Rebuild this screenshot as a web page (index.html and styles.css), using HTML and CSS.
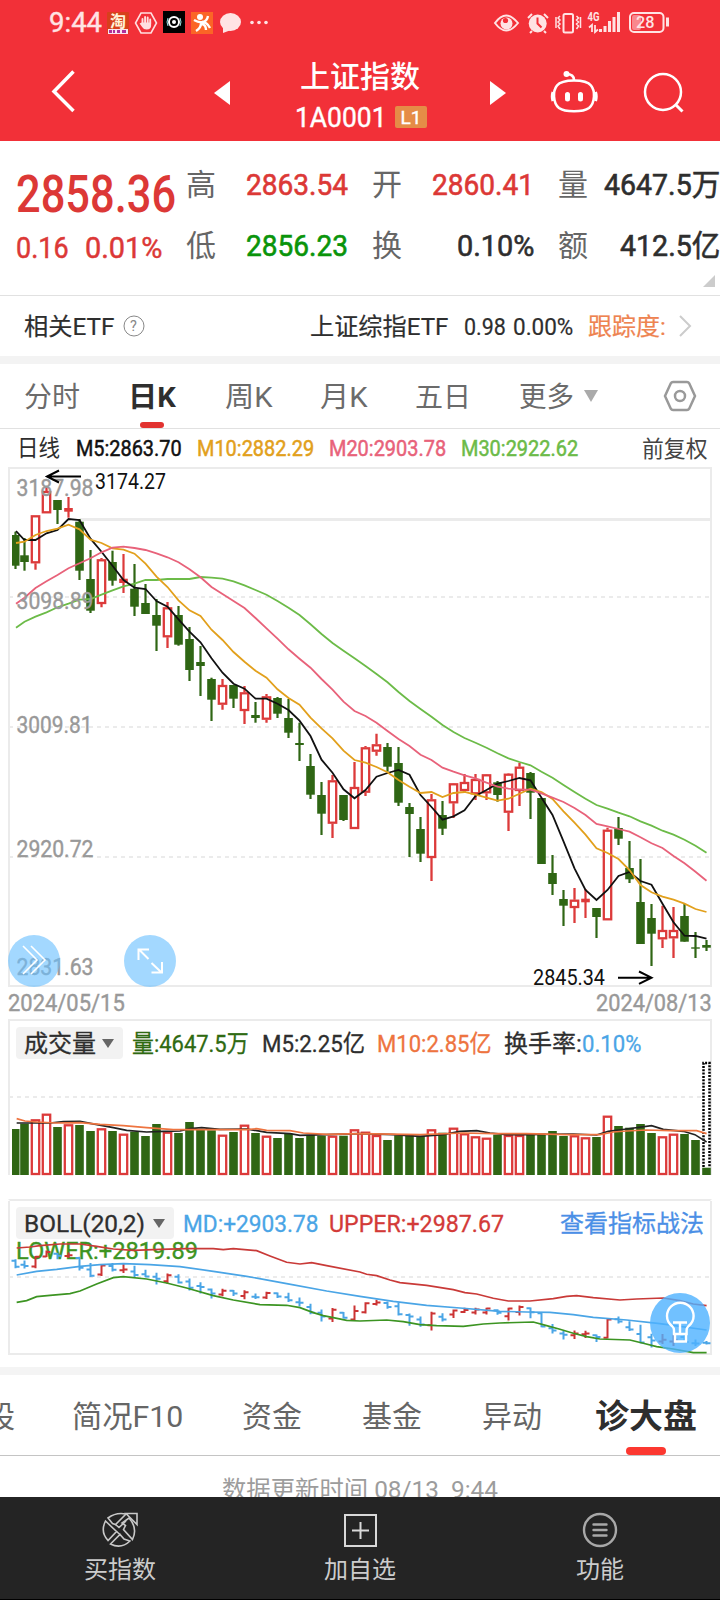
FILE: index.html
```html
<!DOCTYPE html>
<html lang="zh-CN">
<head>
    <meta charset="UTF-8">
    <meta name="viewport" content="width=device-width, initial-scale=1.0">
    <title>上证指数</title>
    <link rel="stylesheet" href="styles.css">
</head>

<body>
    <header class="header">
        <div class="status">
            <span class="time" data-w="53">9:44</span>
            <svg class="apps" width="164" height="26" viewBox="105 10 164 26">
                <rect x="107" y="12" width="22" height="22" rx="1" fill="#d8401c"/>
                <rect x="108" y="29" width="20" height="5" fill="#fbe3ee"/>
                <path d="M109 31.500h3m1 0h2m2 0h3m2 0h4" stroke="#b0309a" stroke-width="3"/>
                <text x="110" y="27" font-size="16" font-weight="700" fill="#fff3d8">淘</text>
                <path d="M141 13h10l5.500 10-5.500 10h-10l-5.500-10z" fill="none" stroke="#ffdfe0" stroke-width="1.600"/>
                <path d="M142.500 24v-5m2.600 4v-6m2.600 6v-5.500m2.500 6v-4" stroke="#ffdfe0" stroke-width="1.900" stroke-linecap="round"/>
                <path d="M141.600 22.500h9.500v3q0 4-4.500 4-3 0-4.500-2.500l-2.500-3.500 1-.6z" fill="#ffdfe0"/>
                <rect x="163" y="11" width="22" height="22"/>
                <circle cx="174" cy="22" r="5" fill="none" stroke="#fff" stroke-width="2"/>
                <circle cx="174" cy="22" r="2" fill="#fff"/>
                <path d="M168 18q-2 4 0 8m12-8q2 4 0 8" fill="none" stroke="#9fe6ea"/>
                <rect x="191" y="12" width="22" height="22" fill="#fb6526"/>
                <circle cx="200" cy="17" r="3" fill="#fff"/>
                <path d="M194 20q5 3 9 2 4-1 5-6M202 22q5 0 8 6M201 23q0 5-5 8M202 24q4 1 4 6" fill="none" stroke="#fff" stroke-width="2.400"/>
                <ellipse cx="230.500" cy="22" rx="10.500" ry="9" fill="#ffe3e4"/>
                <path d="M223 27v6l8-3z" fill="#ffe3e4"/>
                <circle cx="252" cy="22.500" r="1.800" fill="#ffe3e4"/>
                <circle cx="259" cy="22.500" r="1.800" fill="#ffe3e4"/>
                <circle cx="266" cy="22.500" r="1.800" fill="#ffe3e4"/>
            </svg>
            <svg class="sys" width="180" height="26" viewBox="492 10 180 26">
                <g fill="none" stroke="#ffe3e4" stroke-width="2">
                    <path d="M495 23q11-15 23 0-12 15-23 0z"/>
                    <path d="M528 18l4-4m12 0l4 4M532 31l-2 2m14-2l2 2"/>
                    <rect x="563.500" y="14" width="9.500" height="18.500" rx="1.500"/>
                    <path d="M560 16l-2 2 2 2-2 2 2 2-2 2 2 3M556 17v11M576.500 16l2 2-2 2 2 2-2 2 2 2-2 3M580.500 17v11" stroke-width="1.500"/>
                    <path d="M592 32v-7l-3 2.500M595 25v7l3-2.500" stroke-width="1.800"/>
                    <path d="M600.500 32v-3m4.500 3v-6m4.500 6v-11m4.500 11v-15m4.500 15v-20" stroke-width="3"/>
                    <rect x="630" y="13" width="33.500" height="19" rx="4"/>
                    <path d="M667.500 17.500v9" stroke-width="3"/>
                </g>
                <circle cx="506.500" cy="23.500" r="6" fill="#ffe3e4"/>
                <circle cx="505.500" cy="20.500" r="2.600" fill="#f23038"/>
                <circle cx="537.700" cy="23.500" r="9" fill="#ffe3e4"/>
                <path d="M537.500 17.500v6l4 4" fill="none" stroke="#f23038" stroke-width="2"/>
                <rect x="632" y="15" width="9" height="15" rx="2" fill="#f9888d"/>
                <text x="587.500" y="21" font-size="12.500" font-weight="700" fill="#ffe3e4" textLength="12" lengthAdjust="spacingAndGlyphs">4G</text>
                <text x="636" y="28" font-size="17" font-weight="500" fill="#ffe3e4" textLength="18.500" lengthAdjust="spacingAndGlyphs">28</text>
            </svg>
        </div>
        <div class="nav">
            <svg class="back" width="30" height="48" viewBox="48 67 30 48"><path d="M73.500 71.500L54 91.500l19.500 19.500" fill="none" stroke="#fff" stroke-width="3.500"/></svg>
            <svg class="prev" width="16" height="24" viewBox="0 0 16 24"><path d="M16 0v24L0 12z" fill="#fff"/></svg>
            <div class="title">
                <h1 data-w="120">上证指数</h1>
                <div class="code"><span data-w="92">1A0001</span><b>L1</b></div>
            </div>
            <svg class="next" width="16" height="24" viewBox="0 0 16 24"><path d="M0 0v24L16 12z" fill="#fff"/></svg>
            <svg class="robot" width="48" height="46" viewBox="550 69 48 46">
                <path d="M574 80.500q13 0 17 5 3.500 4.500 3 11-.5 8-5 11.500-4.500 3.300-15 3.300t-15-3.300q-4.500-3.500-5-11.500-.5-6.500 3-11 4-5 17-5z" fill="none" stroke="#fff" stroke-width="2.600"/>
                <path d="M553 92q-1.500 4.500 0 9M595.500 92q1.500 4.500 0 9" fill="none" stroke="#fff" stroke-width="3"/>
                <path d="M574 80q0-6-8-6" fill="none" stroke="#fff" stroke-width="2.600"/>
                <circle cx="566.500" cy="74" r="3" fill="#fff"/>
                <path d="M567.500 94.500v4.500m13-4.500v4.500" stroke="#fff" stroke-width="5" stroke-linecap="round"/>
            </svg>
            <svg class="search" width="42" height="42" viewBox="643 71 42 42"><circle cx="663" cy="92" r="18" fill="none" stroke="#fff" stroke-width="2.500"/><path d="M675.500 104.500l7 7" stroke="#fff" stroke-width="3"/></svg>
        </div>
    </header>

    <section class="quote">
        <div class="main">
            <div class="price up"><span data-w="160">2858.36</span></div>
            <div class="change up"><span data-w="53">0.16</span><span data-w="77">0.01%</span></div>
        </div>
        <div class="cols">
            <div class="item"><label>高</label><span class="up" data-w="102">2863.54</span></div>
            <div class="item"><label>开</label><span class="up" data-w="102">2860.41</span></div>
            <div class="item"><label>量</label><span data-w="116">4647.5万</span></div>
            <div class="item"><label>低</label><span class="down" data-w="102">2856.23</span></div>
            <div class="item"><label>换</label><span data-w="77">0.10%</span></div>
            <div class="item"><label>额</label><span data-w="100">412.5亿</span></div>
        </div>
        <i class="corner"></i>
    </section>

    <section class="etf">
        <span data-w="90">相关ETF</span>
        <svg class="help" width="22" height="22" viewBox="0 0 22 22"><circle cx="11" cy="11" r="10" fill="none" stroke="#888"/><text x="7" y="16" font-size="14.500" fill="#888">?</text></svg>
        <span class="name" data-w="138">上证综指ETF</span>
        <span class="v1" data-w="42">0.98</span>
        <span class="v2" data-w="60">0.00%</span>
        <span class="track" data-w="78">跟踪度:</span>
        <svg class="arrow" width="14" height="24" viewBox="0 0 14 24"><path d="M2 2l10 10L2 22" fill="none" stroke="#ccc" stroke-width="2"/></svg>
    </section>

    <nav class="period">
        <span class="t1" data-w="56">分时</span>
        <span class="t2 on" data-w="48">日K</span>
        <span class="t3" data-w="48">周K</span>
        <span class="t4" data-w="48">月K</span>
        <span class="t5" data-w="56">五日</span>
        <span class="t6" data-w="55">更多</span>
        <i class="tri"></i>
        <svg class="setting" width="34" height="32" viewBox="0 0 34 32"><path d="M10 2h14q1.500 0 2.200 1.300L32 16l-5.800 12.700Q25.500 30 24 30H10q-1.500 0-2.200-1.300L2 16 7.800 3.300Q8.500 2 10 2z" fill="none" stroke="#999" stroke-width="2.500"/><circle cx="17" cy="16" r="5" fill="none" stroke="#999" stroke-width="2.500"/></svg>
    </nav>

    <div class="ma">
        <span class="c-text" data-w="43">日线</span>
        <span class="c-m5" data-w="106">M5:2863.70</span>
        <span class="c-m10" data-w="117">M10:2882.29</span>
        <span class="c-m20" data-w="117">M20:2903.78</span>
        <span class="c-m30" data-w="117">M30:2922.62</span>
        <span class="fq" data-w="66">前复权</span>
    </div>

    <div class="panel">
        <svg class="chart" width="720" height="520" viewBox="0 467 720 520">
            <path d="M9 468h702M9 986h702" class="frame"/>
            <path d="M9 467v520M711 467v520" class="frame"/>
            <path d="M9 597h700M9 727h700M9 857h700" class="dash"/>
            <path d="M80 519.500h631" stroke="#ebebeb" stroke-width="3"/>
            <g id="kline"></g>
            <g class="axis">
                <text x="16.500" y="496" textLength="77" lengthAdjust="spacingAndGlyphs">3187.98</text>
                <text x="16.500" y="609" textLength="77" lengthAdjust="spacingAndGlyphs">3098.89</text>
                <text x="16.500" y="733" textLength="76" lengthAdjust="spacingAndGlyphs">3009.81</text>
                <text x="16.500" y="857" textLength="77" lengthAdjust="spacingAndGlyphs">2920.72</text>
                <text x="16.500" y="975" textLength="77" lengthAdjust="spacingAndGlyphs">2831.63</text>
            </g>
            <g class="mark">
                <text x="95" y="489" textLength="71" lengthAdjust="spacingAndGlyphs">3174.27</text>
                <text x="533" y="984.500" textLength="72" lengthAdjust="spacingAndGlyphs">2845.34</text>
                <path d="M81 476.500H47M59 470.500l-12 6 12 6M618 977.700h33M639 971.500l12.500 6.200-12.500 6.200"/>
            </g>
            <circle cx="34" cy="961" r="26" class="bubble"/>
            <path d="M23 946l14 14-14 14M31 946l14 14-14 14" fill="none" stroke="#fff" stroke-width="1.600"/>
            <circle cx="150" cy="961" r="26" class="bubble"/>
            <path d="M148.500 959l-9.500-9.500M138.500 960v-10.500h10.500M151.500 963l9.500 9M162 962v10.500h-10.500" fill="none" stroke="#fff" stroke-width="2"/>
        </svg>
        <div class="dates">
            <span data-w="117">2024/05/15</span>
            <span data-w="116">2024/08/13</span>
        </div>
    </div>

    <div class="panel vol">
        <div class="legend">
            <span class="pick"><span data-w="72">成交量</span><i></i></span>
            <span class="c-green" data-w="117">量:4647.5万</span>
            <span class="c-text" data-w="103">M5:2.25亿</span>
            <span class="c-orange" data-w="115">M10:2.85亿</span>
            <span class="c-text hs" data-w="78">换手率:</span><span class="c-blue rate" data-w="59">0.10%</span>
        </div>
        <svg class="chart" width="720" height="115" viewBox="0 1061 720 115">
            <path d="M9 1097h700" class="dash"/>
            <g id="volume"></g>
            <g transform="translate(0 1010) scale(.3333)" fill="none" stroke-width="5">
                <path stroke="#222" d="M50 339L150 339 190 335 240 334 275 341 340 353 380 361 440 366 490 364 540 363 570 356 605 353 660 358 740 357 800 367 870 371 900 376 1080 371 1180 374 1260 379 1330 374 1380 364 1430 362 1470 369 1520 374 1580 374 1720 372 1790 375 1825 364 1880 357 1955 347 1990 358 2050 364 2085 374 2120 396"/>
                <path stroke="#ee7440" d="M50 326L75 333 110 336 170 339 240 338 300 343 370 347 440 353 520 359 740 359 770 356 800 361 870 362 910 369 980 373 1080 371 1260 374 1390 369 1480 371 1580 371 1700 374 1800 374 1840 366 1880 363 1940 360 2010 362 2090 362 2120 371"/>
            </g>
        </svg>
    </div>

    <div class="panel boll">
        <div class="legend">
            <span class="pick"><span data-w="121">BOLL(20,2)</span><i></i></span>
            <span class="c-blue md" data-w="135">MD:+2903.78</span>
            <span class="c-red" data-w="175">UPPER:+2987.67</span>
            <span class="link" data-w="144">查看指标战法</span>
        </div>
        <svg class="chart" width="720" height="115" viewBox="0 1241 720 115">
            <path d="M9 1277h700" class="dash"/>
            <path d="M8 1354h704" class="frame"/>
            <text x="16" y="1259" class="lower" textLength="182" lengthAdjust="spacingAndGlyphs">LOWER:+2819.89</text>
            <g id="ohlc"></g>
            <g transform="translate(0 1010) scale(.3333)" fill="none" stroke-width="5">
                <path stroke="#c93a38" d="M50 714L90 711 120 707 180 702 240 702 290 709 340 717 400 721 480 718 560 716 640 716 670 719 700 716 770 722 810 738 860 757 900 762 935 758 980 767 1080 786 1100 793 1130 797 1170 810 1200 818 1280 826 1360 839 1395 848 1430 852 1480 865 1525 873 1590 873 1660 866 1700 859 1730 857 1780 863 1860 870 1910 867 1990 864 2040 872 2080 882 2120 887"/>
                <path stroke="#4aa5e6" d="M50 795L110 784 170 778 240 769 300 764 370 761 450 764 540 770 640 784 740 799 860 821 980 843 1080 859 1180 874 1280 886 1380 894 1500 904 1580 906 1650 907 1720 914 1780 922 1880 930 1980 941 2120 960"/>
                <path stroke="#3c9422" d="M50 877L80 872 110 860 150 856 210 851 240 843 290 822 340 803 370 800 440 807 500 819 560 834 640 857 700 870 780 884 860 886 900 893 940 908 970 917 1000 923 1040 931 1080 933 1160 930 1210 935 1260 944 1310 947 1390 949 1450 942 1500 939 1600 936 1640 947 1680 958 1720 970 1760 980 1800 987 1890 990 1930 1000 1970 1010 2020 1017 2080 1028 2120 1028"/>
            </g>
            <circle cx="680" cy="1323" r="30" fill="#4db2ff" fill-opacity=".8"/>
            <g fill="none" stroke="#fff" stroke-width="2.400">
                <path d="M674 1334v-4q0-2-2-4-5-4-5-10a13.300 13.300 0 0 1 26.600 0q0 6-5 10-2 2-2 4v4zM675 1334v7.500h11v-7.500"/>
                <path d="M673 1322.500h14M680 1322.500v11"/>
            </g>
        </svg>
    </div>

    <nav class="tabs">
        <span class="b0">成分股</span>
        <span class="b1" data-w="111">简况F10</span>
        <span class="b2" data-w="60">资金</span>
        <span class="b3" data-w="60">基金</span>
        <span class="b4" data-w="60">异动</span>
        <span class="b5 on" data-w="102">诊大盘</span>
    </nav>

    <p class="update"><span data-w="276">数据更新时间 08/13&nbsp; 9:44</span></p>

    <footer class="bar">
        <div class="btn">
            <svg width="38" height="38" viewBox="101 1511 38 38" fill="none" stroke="#c8c8c8" stroke-width="1.600">
                <path d="M108 1518q8-6 18-4l-10.500 10.500 -3-1zM129 1518q9 10 3.500 21.500l-9-10 2-4-3.500-2.500zM105.500 1521l11 10.500-8.500 9q-8-8.500-2.500-19.500zM110.500 1544l9.500-9.500 4 4.500 6 2q-9 8.500-19.500 3z"/>
                <path d="M126 1513.500h11v11zM115.500 1524.500l3.500 3 7-6.500M116.500 1531.500l3.500 3"/>
            </svg>
            <span data-w="72">买指数</span>
        </div>
        <div class="btn">
            <svg width="38" height="38" viewBox="0 0 38 38" fill="none" stroke="#d8d8d8" stroke-width="2"><rect x="4" y="4" width="31" height="31"/><path d="M11 19.500h17M19.500 11v17"/></svg>
            <span data-w="72">加自选</span>
        </div>
        <div class="btn">
            <svg width="38" height="38" viewBox="0 0 38 38" fill="none" stroke="#a8a8a8" stroke-width="2.400"><circle cx="19" cy="19" r="16"/><path d="M12.500 13.500h13M12.500 19h13M12.500 24.500h13" stroke-linecap="round"/></svg>
            <span data-w="48">功能</span>
        </div>
    </footer>

    <script src="main.js"></script>
</body>
</html>
```
FILE: styles.css
```css
* {
    box-sizing: border-box;
}
body, h1, p {
    margin: 0;
    padding: 0;
}
body {
    display: flex;
    flex-direction: column;
    width: 720px;
    height: 1600px;
    overflow: hidden;
    background: #fff;
    color: #2e2e2e;
    font-family: Roboto, "Noto Sans CJK SC", sans-serif;
}
svg {
    display: block;
    flex: none;
}
[data-w] {
    display: inline-block;
    flex: none;
    white-space: nowrap;
}
.fit {
    display: inline-block;
    transform-origin: 0 50%;
}
.up { color: #dc3836; }
.down { color: #0a940a; }

/* 顶部 */
.header {
    flex: none;
    height: 141px;
    background: #f23038;
    color: #fff;
}
.status {
    display: flex;
    align-items: center;
    height: 45px;
    padding-left: 49px;
}
.time {
    padding-top: 2px;
    color: #ffe3e4;
    font-size: 27px;
    line-height: 45px;
    -webkit-text-stroke: .4px;
}
.apps { margin-left: 3px; }
.sys { margin-left: 223px; }
.nav {
    display: flex;
    height: 96px;
    padding-left: 48px;
}
.back { margin-top: 22px; }
.prev { margin: 36px 0 0 136px; }
.title {
    width: 228px;
    margin-left: 16px;
    text-align: center;
}
.title h1 {
    margin-top: 11px;
    font-size: 30px;
    font-weight: 500;
    line-height: 42px;
}
.code {
    display: flex;
    align-items: center;
    padding-left: 49px;
    font-size: 27px;
    line-height: 40px;
    font-weight: 400;
    -webkit-text-stroke: .4px;
}
.code b {
    width: 32px;
    height: 22px;
    margin: -2px 0 0 8px;
    border-radius: 2px;
    background: #e58c47;
    font-size: 19px;
    font-weight: 400;
    line-height: 23px;
}
.next { margin: 36px 0 0 16px; }
.robot { margin: 24px 0 0 44px; }
.search { margin: 26px 0 0 45px; }

/* 行情 */
.quote {
    position: relative;
    display: flex;
    flex: none;
    height: 155px;
    border-bottom: 1px solid #e1e1e1;
}
.main {
    width: 187px;
    padding-left: 16px;
}
.price {
    height: 60px;
    margin-top: 24px;
    font-size: 51px;
    font-weight: 500;
    line-height: 60px;
}
.change {
    display: flex;
    gap: 16px;
    font-size: 30px;
    line-height: 45px;
    -webkit-text-stroke: .5px;
}
.cols {
    display: grid;
    grid-template-columns: 161px 161px 161px;
    grid-auto-rows: 61px;
    column-gap: 25px;
    margin-top: 13px;
}
.item {
    display: flex;
    justify-content: space-between;
    font-size: 30px;
    line-height: 61px;
    -webkit-text-stroke: .6px;
}
.item label {
    margin-left: -1px;
    color: #666;
    -webkit-text-stroke: 0;
}
.corner {
    position: absolute;
    right: 5px;
    bottom: 8px;
    border-bottom: 12px solid #ccc;
    border-left: 12px solid transparent;
}

/* ETF */
.etf {
    display: flex;
    align-items: center;
    flex: none;
    height: 68px;
    padding-left: 24px;
    border-bottom: 8px solid #f3f3f3;
    font-size: 24px;
    line-height: 58px;
    -webkit-text-stroke: .2px;
}
.etf > span { padding-top: 2px; }
.help {
    margin-left: 9px;
    -webkit-text-stroke: 0;
}
.name { margin-left: 165px; }
.v1 { margin-left: 16px; }
.v2 { margin-left: 7px; }
.track {
    margin-left: 15px;
    color: #ee8350;
}
.arrow { margin-left: 12px; }

/* 周期 */
.period {
    display: flex;
    align-items: center;
    flex: none;
    height: 65px;
    padding-left: 24px;
    border-bottom: 1px solid #e1e1e1;
    color: #6b6b6b;
    font-size: 28px;
    line-height: 60px;
}
.period > span { padding-top: 4px; }
.period .on {
    position: relative;
    color: #2e2e2e;
    font-weight: 700;
}
.period .on::after {
    content: "";
    position: absolute;
    left: 12px;
    bottom: 0;
    width: 24px;
    height: 6px;
    border-radius: 3px;
    background: #e23330;
}
.t2 { margin-left: 48px; }
.t3 { margin-left: 49px; }
.t4 { margin-left: 47px; }
.t5 { margin-left: 47px; }
.t6 { margin-left: 48px; }
.tri {
    margin: -1px 0 0 10px;
    border-top: 12px solid #aaa;
    border-left: 7.5px solid transparent;
    border-right: 7.5px solid transparent;
}
.setting { margin-left: 65px; }

.ma {
    display: flex;
    flex: none;
    gap: 15px;
    height: 38px;
    padding: 0 12px 0 17px;
    font-size: 22.5px;
    line-height: 39px;
}
.ma .c-text { margin-right: 1px; }
.c-m5, .c-m10, .c-m20, .c-m30 { -webkit-text-stroke: .5px; }
.fq {
    margin-left: auto;
    padding-top: 1px;
    color: #444;
}
.c-text { color: #2e2e2e; }
.c-m5 { color: #111; }
.c-m10 { color: #e2a01c; }
.c-m20 { color: #e8627a; }
.c-m30 { color: #6cbb48; }
.c-green { color: #2f6a12; }
.c-orange { color: #ee7440; }
.c-blue { color: #4aa5e6; }
.c-red { color: #d33a38; }

/* 图表 */
.panel { flex: none; }
.chart { overflow: visible; }
.frame {
    fill: none;
    stroke: #ebebeb;
    stroke-width: 2;
}
.dash {
    fill: none;
    stroke: #ebebeb;
    stroke-width: 2;
    stroke-dasharray: 4 4;
}
.axis {
    fill: #999;
    stroke: #999;
    stroke-width: .4px;
    font-size: 24px;
}
.mark {
    fill: #111;
    font-size: 21.5px;
}
.mark path {
    fill: none;
    stroke: #000;
    stroke-width: 2;
}
.bubble {
    fill: #6ac0ff;
    fill-opacity: .62;
}
.dates {
    display: flex;
    justify-content: space-between;
    height: 32px;
    padding: 0 8px;
    color: #999;
    font-size: 24px;
    line-height: 33px;
    -webkit-text-stroke: .4px;
}
.vol, .boll {
    width: 704px;
    margin-left: 8px;
    border: 2px solid #ebebeb;
    border-bottom: 0;
}
.vol {
    height: 156px;
    margin-bottom: 24px;
}
.boll {
    height: 168px;
    border-color: transparent;
    border-top-color: #ebebeb;
    background: linear-gradient(#ebebeb, #ebebeb) 0 0 / 2px 154px no-repeat border-box,
        linear-gradient(#ebebeb, #ebebeb) 100% 0 / 2px 154px no-repeat border-box;
}
.vol .chart, .boll .chart { margin-left: -10px; }
.legend {
    display: flex;
    height: 40px;
    padding: 6px 6px 0;
    font-size: 24px;
    line-height: 35px;
    -webkit-text-stroke: .3px;
}
.pick {
    display: flex;
    align-items: center;
    flex: none;
    height: 32px;
    margin-right: 9px;
    padding: 0 9px 0 8px;
    border-radius: 4px;
    background: #f2f2f2;
}
.pick > span { padding-top: 2px; }
.pick i {
    margin-left: 6px;
    border-top: 9px solid #666;
    border-left: 6.5px solid transparent;
    border-right: 6.5px solid transparent;
}
.vol .c-text { margin-left: 13px; }
.c-orange { margin-left: 12px; }
.vol .hs { margin-left: 12px; }
.boll .pick i { margin-left: 8px; }
.c-red { margin-left: 11px; }
.link {
    margin-left: auto;
    color: #4b8fe6;
}
.lower {
    fill: #3c9422;
    stroke: #3c9422;
    stroke-width: .4px;
    font-size: 24px;
}

/* 底部页签 */
.tabs {
    display: flex;
    flex: none;
    height: 89px;
    border-top: 8px solid #f4f4f4;
    border-bottom: 1px solid #c4c4c4;
    color: #666;
    font-size: 30px;
    line-height: 84px;
}
.b0 {
    width: 90px;
    margin-left: -75px;
    white-space: nowrap;
}
.b1 { margin-left: 57px; }
.b2 { margin-left: 59px; }
.b3 { margin-left: 60px; }
.b4 { margin-left: 60px; }
.b5 { margin-left: 53px; }
.tabs .on {
    position: relative;
    height: 80px;
    color: #2e2e2e;
    font-size: 33px;
    font-weight: 700;
}
.tabs .on::after {
    content: "";
    position: absolute;
    left: 31px;
    bottom: 0;
    width: 40px;
    height: 8px;
    border-radius: 4px;
    background: #fc3830;
}
.update {
    flex: none;
    height: 41px;
    padding: 14px 0 0 222px;
    overflow: hidden;
    color: #9c9c9c;
    font-size: 24px;
    line-height: 40px;
}

.bar {
    display: flex;
    flex: none;
    height: 103px;
    border-bottom: 1px solid #000;
    background: #242424;
}
.btn {
    display: flex;
    flex: 1;
    flex-direction: column;
    align-items: center;
    padding-top: 14px;
    color: #ccc;
    font-size: 24px;
    line-height: 42px;
}
```
FILE: main.js
```js
// 把文字横向压缩到指定宽度
document.querySelectorAll("[data-w]").forEach(function (el) {
    var w = +el.dataset.w;
    var inner = document.createElement("span");
    inner.className = "fit";
    inner.textContent = el.textContent;
    el.textContent = "";
    el.appendChild(inner);
    var s = w / inner.offsetWidth;
    el.style.width = w + "px";
    inner.style.transform = "scaleX(" + s + ")";
});

// [涨跌, 最高, 实体上, 实体下, 最低, 量]
var data = [
    ["g", 531.7, 535, 565.7, 569, 1129], ["g", 538, 555.3, 562, 570.7, 1123.7],
    ["r", 515.3, 515.3, 563.3, 569.7, 1119.3], ["r", 487, 491, 513.3, 513.3, 1113.7],
    ["g", 500, 500, 510, 524, 1127], ["r", 497, 508, 511.7, 517.7, 1124.3],
    ["g", 519, 521.7, 570.7, 580, 1125], ["g", 550, 579, 610.7, 613, 1131],
    ["r", 558, 559.3, 604, 607.3, 1128.3], ["g", 550.7, 562, 580.7, 585.7, 1131],
    ["r", 554, 578.7, 583, 593, 1133.7], ["g", 564, 588.7, 606.7, 616, 1131.7],
    ["g", 584, 603, 614, 614, 1136], ["g", 599, 615, 625.7, 651, 1124],
    ["r", 602, 607.3, 637.3, 648, 1131.7], ["g", 606, 615, 644.7, 645.7, 1133],
    ["g", 627, 639, 670, 681, 1122], ["g", 646, 662, 666, 696, 1130],
    ["g", 677.7, 679, 699.7, 721, 1130.3], ["r", 679, 685, 704.7, 709.7, 1134.7],
    ["g", 685, 685, 698.7, 708, 1132], ["r", 686, 692.3, 711, 724, 1124.7],
    ["g", 702, 715, 718, 722.7, 1133], ["r", 694, 696.3, 719.7, 722.7, 1135.7],
    ["g", 697, 698, 713.7, 718, 1138], ["g", 699, 718, 732.7, 738, 1133.7],
    ["g", 722.7, 743, 745, 761, 1138], ["g", 754, 766, 794.7, 799, 1135],
    ["g", 782, 795, 813.7, 835, 1135.7], ["r", 775, 780.3, 823.7, 838, 1135.7],
    ["g", 795, 795, 820, 821, 1135.7], ["r", 762, 787, 829, 829, 1129.3],
    ["r", 746, 747.3, 792.7, 796, 1131.7], ["r", 733.7, 744.3, 751.7, 755.7, 1135],
    ["g", 743, 747, 766.7, 771.7, 1140], ["g", 747, 763, 802.7, 806, 1135.3],
    ["g", 803, 807, 814, 857, 1135.3], ["g", 817, 829, 853.7, 862, 1135.7],
    ["r", 794, 799.3, 858, 881, 1129.3], ["g", 801, 815, 828.7, 835, 1132.7],
    ["r", 783, 783.3, 803.3, 818, 1127.7], ["r", 774, 782, 791, 793, 1133.3],
    ["r", 774, 779, 794.3, 800, 1136.3], ["r", 774, 774.3, 793.3, 800, 1137.7],
    ["g", 781, 782.3, 795, 801.7, 1134.7], ["r", 773.3, 773.7, 812.7, 831, 1135],
    ["r", 762.7, 766.7, 791, 806, 1135], ["g", 772, 773, 792.7, 819, 1134.7],
    ["g", 798, 798, 864, 864, 1133.7], ["g", 855, 873, 884, 895, 1131],
    ["g", 890, 899, 905.7, 926, 1136], ["r", 888, 899.7, 908, 923, 1135.3],
    ["r", 889, 898.7, 902.3, 918, 1137.3], ["g", 908, 908, 917, 938, 1137],
    ["r", 827.7, 829.7, 920.3, 920.3, 1115.7], ["g", 817, 828, 838.7, 845, 1126],
    ["g", 841, 868, 879.3, 883, 1127.7], ["g", 859, 902, 944, 944, 1124],
    ["g", 904, 918, 933.7, 966, 1133], ["r", 905.7, 930, 939.3, 948, 1136.3],
    ["r", 907, 930, 938.3, 958, 1133.7], ["g", 904, 916, 941.7, 941.7, 1134],
    ["g", 932, 947.3, 948.7, 958, 1140], ["g", 940, 945, 947.7, 951, 1167.7]
];

var lines = {
    "#6cbb48": [627.7, 621.7, 616.7, 612.3, 607.3, 603.7, 599.7, 599, 594.7, 590.3, 586.3, 583.7, 580, 580, 579, 579, 579, 577, 577.7, 578.7, 581.3, 585.3, 590, 594.7, 601, 607.7, 615, 624.3, 634, 643, 650.7, 658.3, 666, 674, 682.3, 692, 701, 709, 716.7, 725, 732, 738, 742.7, 747.7, 753.3, 758.3, 762, 765.3, 771.7, 777.7, 785, 792, 798.7, 805, 808.7, 812.7, 816.3, 821.3, 825.7, 830.7, 834.7, 839.7, 845.7, 852.7],
    "#111": [531, 540, 540, 533.3, 530, 519, 520, 538.7, 551.7, 565.7, 580, 587.7, 589, 601, 606.7, 619.3, 631.7, 642.3, 658.3, 672.7, 683.7, 688.7, 698.7, 698.7, 703.7, 710, 720.7, 736, 759.7, 772.7, 789.3, 798.3, 790, 776.7, 773, 770, 774.7, 795, 807, 819.7, 816.3, 810.3, 796, 790, 783.7, 781, 778, 780.3, 797.7, 815, 841.3, 868.3, 890, 900, 890, 876, 872, 881, 884.7, 903.7, 922.3, 935.7, 936, 938.7],
    "#e2a01c": [543, 541.7, 535, 531, 528.7, 524.7, 529.3, 539.7, 543, 548.3, 549.7, 553.7, 563.7, 576.7, 587, 600.3, 610.3, 616, 629.7, 640, 652, 661.7, 670.7, 677.7, 689.3, 698, 704.7, 717.7, 728.3, 738.3, 750.7, 760, 762.7, 767, 772.3, 780, 786.7, 793, 792, 797, 793, 792, 794.7, 797.7, 800.7, 798.7, 793.7, 788.7, 792, 799, 811.3, 822.7, 834.7, 848.3, 853, 859, 870, 885, 892.3, 896.7, 899.7, 903.7, 909, 912],
    "#e8627a": [603.7, 597.7, 588, 581.3, 575, 568.3, 563.3, 558.3, 552.3, 547.7, 546.7, 548, 550, 553.3, 557.3, 562.3, 569.3, 577.3, 587, 594, 601, 608, 618, 628.3, 638.7, 649.3, 658.7, 667.7, 679, 689.7, 701.7, 711, 716, 722.7, 731, 739, 746, 754.7, 760, 767.7, 771.7, 775.3, 778.3, 782.7, 786.7, 788.7, 789.7, 789.7, 793.3, 797.7, 802, 808, 815, 824, 826.3, 829, 831.7, 837.3, 843.3, 848, 856, 863.3, 871.7, 880.7]
};

var RED = "#dc3a3a", GREEN = "#2f6614", BLUE = "#4aa5e6";

function cx(i) {
    return i ? 13.5 + 11 * i : 15.5;
}
function rect(x, y, w, h, fill, stroke) {
    return '<rect x="' + x + '" y="' + y + '" width="' + w + '" height="' + Math.max(h, 0) + '" fill="' + fill + '"' +
        (stroke ? ' stroke="' + stroke + '" stroke-width="2.3"' : '') + '/>';
}
function path(d, color, w) {
    return '<path d="' + d + '" fill="none" stroke="' + color + '" stroke-width="' + w + '"/>';
}

var k = "", v = "", o = "";
data.forEach(function (d, i) {
    var x = cx(i), up = d[0] === "r", c = up ? RED : GREEN;
    var left = i ? x - 4.3 : 12, w = i ? 8.6 : 7.5;

    // K线
    if (up && d[3] - d[2] > 6) {
        k += path("M" + x + " " + d[1] + "V" + d[2] + "M" + x + " " + d[3] + "V" + d[4], c, 2.3);
        k += rect(left + .6, d[2] + 1, w - 1.2, d[3] - d[2] - 2, "#fff", c);
    } else {
        k += path("M" + x + " " + d[1] + "V" + d[4], c, 2.2);
        k += rect(left, d[2], w, d[3] - d[2], c);
    }

    // 成交量
    v += up ? rect(left + .6, d[5] + 1, w - 1.2, 1173 - d[5], "#fff", c) : rect(left, d[5], w, 1175 - d[5], c);

    // 美国线
    var y = function (n) { return (1153.7 + .2 * n).toFixed(1); };
    var open = y(up ? d[3] : d[2]), close = y(up ? d[2] : d[3]);
    o += path("M" + x + " " + (y(d[1]) - .7) + "V" + (+y(d[4]) + .7) + "M" + (x - 4) + " " + open + "h4M" + x + " " + close + "h4", up ? "#cc3333" : BLUE, 2);
});
v += '<path d="M703.500 1167V1063h6v104" fill="#fff" stroke="#000" stroke-width="2.500" stroke-dasharray="2 1.300"/>';

Object.keys(lines).forEach(function (c) {
    var pts = lines[c].map(function (y, i) {
        return (i ? 13.5 + 11 * i : 16) + " " + y;
    });
    k += path("M" + pts.join("L"), c, 1.8);
});

document.getElementById("kline").innerHTML = k;
document.getElementById("volume").innerHTML = v;
document.getElementById("ohlc").innerHTML = o;
```
